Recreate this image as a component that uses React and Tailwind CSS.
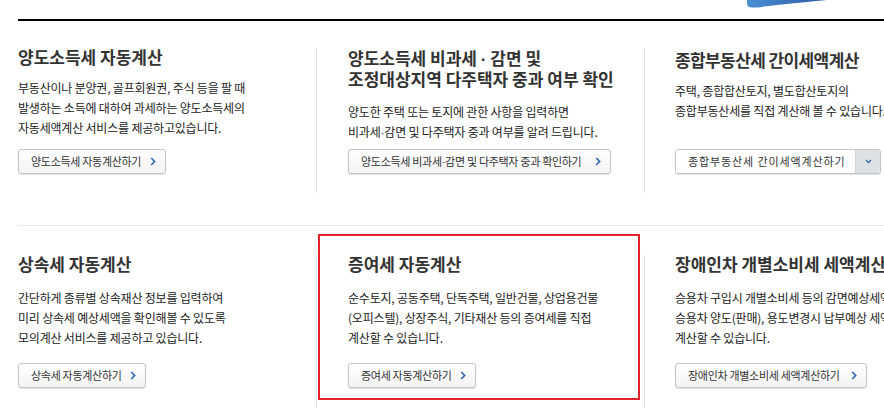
const Chevron = () => (
    <svg width="6" height="9" viewBox="0 0 6 9" className="shrink-0">
        <polyline points="1.2,1 4.6,4.5 1.2,8" fill="none" stroke="#2f66b3" strokeWidth="1.7" />
    </svg>
);

// narrow middle dot (the CJK font draws it full width)
const Dot = () => <span className="font-['Liberation_Sans',sans-serif]">·</span>;

const CalcButton = ({ label, width }) => {
    return (
        <button
            className={`flex items-center h-[25px] pl-[12px] pr-[9px] border border-[#c4c4c4] rounded-[3px] bg-gradient-to-b from-white to-[#f3f3f3] shadow-[0_1px_1px_rgba(0,0,0,0.12)] text-[11px] tracking-[-0.3px] text-[#333] whitespace-nowrap ${width}`}
        >
            <span>{label}</span>
            <span className="ml-auto">
                <Chevron />
            </span>
        </button>
    );
};

const SelectButton = () => {
    return (
        <div className="flex h-[25px] w-[206px] border border-[#c4c4c4] rounded-[3px] shadow-[0_1px_1px_rgba(0,0,0,0.12)] overflow-hidden">
            <div className="flex-1 flex items-center pl-[12px] bg-white text-[11px] tracking-[0.9px] text-[#333] whitespace-nowrap">
                종합부동산세 간이세액계산하기
            </div>
            <div className="w-[25px] flex items-center justify-center bg-[#dde1e6] border-l border-[#d0d4d9]">
                <svg width="7" height="5" viewBox="0 0 7 5">
                    <polyline points="1,1 3.5,3.6 6,1" fill="none" stroke="#2f66b3" strokeWidth="1.3" />
                </svg>
            </div>
        </div>
    );
};

const Cell = ({ title, titleClass = "", desc, descClass, boxHeight, children, className = "" }) => {
    return (
        <div className={`flex flex-col ${className}`}>
            <div className={`flex flex-col ${boxHeight}`}>
                <h3 className={`text-[17px] font-bold text-[#333] whitespace-nowrap ${titleClass}`}>
                    {title.map((line, i) => (
                        <div key={i}>{line}</div>
                    ))}
                </h3>
                <p className={`text-[12px] leading-[20px] tracking-[-0.2px] text-[#222] whitespace-nowrap ${descClass}`}>
                    {desc.map((line, i) => (
                        <span key={i} className="block">
                            {line}
                        </span>
                    ))}
                </p>
            </div>
            {children}
        </div>
    );
};

const App = () => {
    return (
        <div className="w-[884px] h-[408px] overflow-hidden bg-white font-['Noto_Sans_CJK_KR','Noto_Sans',sans-serif]">
            {/* top strip with the edge of the blue banner */}
            <div className="h-[19px] flex justify-end pr-[57px]">
                <svg width="80" height="8" viewBox="0 0 80 8">
                    <defs>
                        <linearGradient id="brush" x1="0" y1="0" x2="1" y2="0">
                            <stop offset="0" stopColor="#4b8fd3" />
                            <stop offset="1" stopColor="#2b5aa6" />
                        </linearGradient>
                    </defs>
                    <path d="M0,0 L80,0 Q60,2 30,5 Q12,7.5 5,7.5 Q0,7.5 0,3 Z" fill="url(#brush)" />
                </svg>
            </div>

            <div className="ml-[18px] w-[1000px] border-t-2 border-black">
                {/* row 1 */}
                <div className="flex mt-[27px]">
                    <Cell
                        className="w-[298px] h-[145px]"
                        boxHeight="h-[101px]"
                        title={["양도소득세 자동계산"]}
                        titleClass="leading-[18px]"
                        descClass="mt-[12px]"
                        desc={[
                            "부동산이나 분양권, 골프회원권, 주식 등을 팔 때",
                            "발생하는 소득에 대하여 과세하는 양도소득세의",
                            "자동세액계산 서비스를 제공하고있습니다.",
                        ]}
                    >
                        <CalcButton label="양도소득세 자동계산하기" width="w-[148px]" />
                    </Cell>
                    <Cell
                        className="w-[328px] h-[145px] border-l border-[#e6e6e6] pl-[31px]"
                        boxHeight="h-[101px]"
                        title={[
                            <>양도소득세 비과세 <Dot /> 감면 및</>,
                            "조정대상지역 다주택자 중과 여부 확인",
                        ]}
                        titleClass="leading-[19px]"
                        descClass="mt-[14px]"
                        desc={[
                            "양도한 주택 또는 토지에 관한 사항을 입력하면",
                            <>비과세<Dot />감면 및 다주택자 중과 여부를 알려 드립니다.</>,
                        ]}
                    >
                        <CalcButton
                            label={<>양도소득세 비과세<Dot />감면 및 다주택자 중과 확인하기</>}
                            width="w-[263px]"
                        />
                    </Cell>
                    <Cell
                        className="w-[330px] h-[145px] border-l border-[#e6e6e6] pl-[30px]"
                        boxHeight="h-[101px]"
                        title={["종합부동산세 간이세액계산"]}
                        titleClass="leading-[18px] pt-[3px] tracking-[-0.6px]"
                        descClass="mt-[12px]"
                        desc={["주택, 종합합산토지, 별도합산토지의", "종합부동산세를 직접 계산해 볼 수 있습니다."]}
                    >
                        <SelectButton />
                    </Cell>
                </div>

                <div className="h-px bg-[#e8e8e8] mt-[32px]" />

                {/* row 2 */}
                <div className="flex mt-[29px]">
                    <Cell
                        className="w-[298px] h-[160px]"
                        boxHeight="h-[108px]"
                        title={["상속세 자동계산"]}
                        titleClass="leading-[18px]"
                        descClass="mt-[15px]"
                        desc={[
                            "간단하게 종류별 상속재산 정보를 입력하여",
                            "미리 상속세 예상세액을 확인해볼 수 있도록",
                            "모의계산 서비스를 제공하고 있습니다.",
                        ]}
                    >
                        <CalcButton label="상속세 자동계산하기" width="w-[128px]" />
                    </Cell>
                    <Cell
                        className="relative w-[328px] h-[160px] border-l border-[#e6e6e6] pl-[31px]"
                        boxHeight="h-[108px]"
                        title={["증여세 자동계산"]}
                        titleClass="leading-[18px]"
                        descClass="mt-[15px]"
                        desc={[
                            "순수토지, 공동주택, 단독주택, 일반건물, 상업용건물",
                            "(오피스텔), 상장주식, 기타재산 등의 증여세를 직접",
                            "계산할 수 있습니다.",
                        ]}
                    >
                        <CalcButton label="증여세 자동계산하기" width="w-[128px]" />
                        {/* highlight frame */}
                        <div className="absolute left-[1px] top-[-21px] w-[322px] h-[166px] border-2 border-[#e3232b] pointer-events-none" />
                    </Cell>
                    <Cell
                        className="w-[330px] h-[160px] border-l border-[#e6e6e6] pl-[30px]"
                        boxHeight="h-[108px]"
                        title={["장애인차 개별소비세 세액계산"]}
                        titleClass="leading-[18px]"
                        descClass="mt-[15px]"
                        desc={[
                            "승용차 구입시 개별소비세 등의 감면예상세액과",
                            "승용차 양도(판매), 용도변경시 납부예상 세액을",
                            "계산할 수 있습니다.",
                        ]}
                    >
                        <CalcButton label="장애인차 개별소비세 세액계산하기" width="w-[192px]" />
                    </Cell>
                </div>
            </div>
        </div>
    );
};

export default App;
